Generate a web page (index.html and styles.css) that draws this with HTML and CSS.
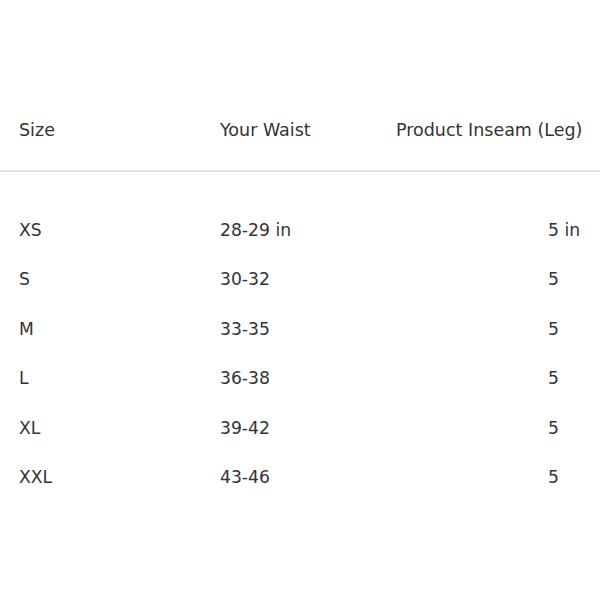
FILE: index.html
```html
<!DOCTYPE html>
<html>
<head>
<meta charset="utf-8">
<link rel="stylesheet" href="styles.css">
</head>
<body>
<div class="chart">
  <div class="row head">
    <div class="c1">Size</div>
    <div class="c2">Your Waist</div>
    <div class="c3">Product Inseam (Leg)</div>
  </div>
  <div class="body">
    <div class="row"><div class="c1">XS</div><div class="c2">28-29 in</div><div class="c3 v">5 in</div></div>
    <div class="row"><div class="c1">S</div><div class="c2">30-32</div><div class="c3 v">5</div></div>
    <div class="row"><div class="c1">M</div><div class="c2">33-35</div><div class="c3 v">5</div></div>
    <div class="row"><div class="c1">L</div><div class="c2">36-38</div><div class="c3 v">5</div></div>
    <div class="row"><div class="c1">XL</div><div class="c2">39-42</div><div class="c3 v">5</div></div>
    <div class="row"><div class="c1">XXL</div><div class="c2">43-46</div><div class="c3 v">5</div></div>
  </div>
</div>
</body>
</html>
```
FILE: styles.css
```css
html, body {
  margin: 0;
  padding: 0;
  background: #fff;
}
body {
  font-family: "DejaVu Sans", "Liberation Sans", sans-serif;
  color: #343434;
  font-size: 17.2px;
}
.chart {
  width: 600px;
  padding-top: 110px;
}
.row {
  display: grid;
  grid-template-columns: 201px 176px 1fr;
  padding-left: 19px;
  height: 40px;
  align-items: center;
  line-height: 20px;
}
.head {
  font-size: 17.5px;
  border-bottom: 2px solid #e2e2e2;
  height: 40px;
  padding-bottom: 20px;
}
.body {
  padding-top: 33px;
}
.body .row {
  height: 49.5px;
}
.v {
  padding-left: 152px;
}
```
